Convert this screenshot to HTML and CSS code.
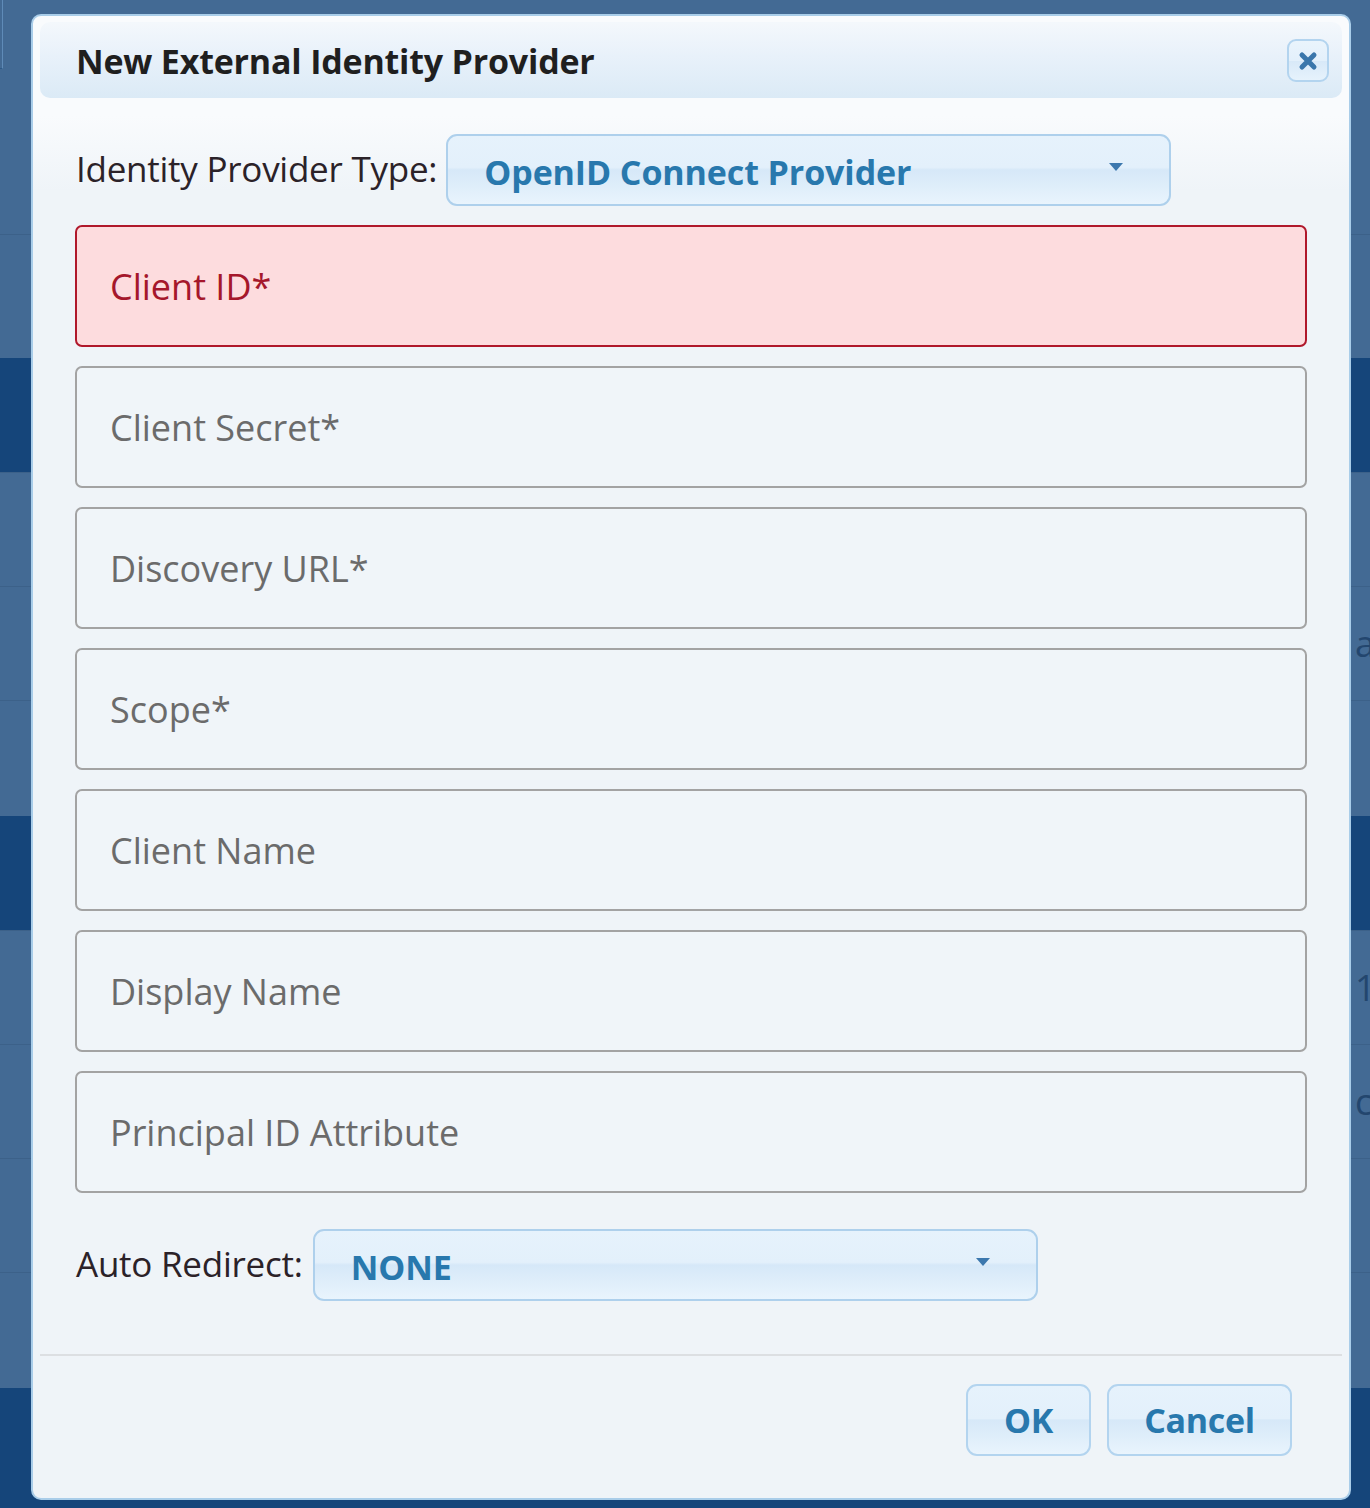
FILE: index.html
```html
<!DOCTYPE html>
<html>
<head>
<meta charset="utf-8">
<title>New External Identity Provider</title>
<link rel="stylesheet" href="styles.css">
</head>
<body>
<div class="backdrop">
  <div class="bg-corner"></div>
  <div class="bg-row r-top"></div>
  <div class="bg-row r-124"></div>
  <div class="bg-row r-114 dark"></div>
  <div class="bg-row r-114"></div>
  <div class="bg-row r-114"><span class="cell">a</span></div>
  <div class="bg-row r-116"></div>
  <div class="bg-row r-114 dark"></div>
  <div class="bg-row r-114"><span class="cell">1</span></div>
  <div class="bg-row r-114"><span class="cell">c</span></div>
  <div class="bg-row r-114"></div>
  <div class="bg-row r-116"></div>
  <div class="bg-row r-120 dark"></div>
</div>

<div class="dialog">
  <div class="dialog-header">
    <h1 class="dialog-title">New External Identity Provider</h1>
    <button class="close-btn" type="button" aria-label="Close">
      <svg width="22" height="22" viewBox="0 0 22 22"><path d="M5 5 L17 17 M17 5 L5 17" stroke="#3a76ab" stroke-width="5" stroke-linecap="round"/></svg>
    </button>
  </div>

  <div class="dialog-body">
    <div class="select-row">
      <span class="field-label">Identity Provider Type:</span>
      <div class="select select-wide">
        <span class="select-value">OpenID Connect Provider</span>
        <span class="select-arrow"></span>
      </div>
    </div>

    <div class="fields">
      <div class="input error">Client ID*</div>
      <div class="input">Client Secret*</div>
      <div class="input">Discovery URL*</div>
      <div class="input">Scope*</div>
      <div class="input">Client Name</div>
      <div class="input">Display Name</div>
      <div class="input">Principal ID Attribute</div>
    </div>

    <div class="select-row redirect-row">
      <span class="field-label">Auto Redirect:</span>
      <div class="select">
        <span class="select-value">NONE</span>
        <span class="select-arrow"></span>
      </div>
    </div>
  </div>

  <div class="dialog-footer">
    <button class="btn btn-ok" type="button">OK</button>
    <button class="btn btn-cancel" type="button">Cancel</button>
  </div>
</div>
</body>
</html>
```
FILE: styles.css
```css
html, body {
  margin: 0;
  padding: 0;
}
body {
  width: 1370px;
  height: 1508px;
  overflow: hidden;
  background: #436a94;
  font-family: "Open Sans", "Noto Sans", sans-serif;
  position: relative;
}

/* backdrop table behind modal */
.backdrop {
  display: flex;
  flex-direction: column;
  width: 1370px;
  height: 1508px;
  position: relative;
}
.bg-corner {
  position: absolute;
  left: 0;
  top: 0;
  width: 2px;
  height: 68px;
  border-right: 1px solid #5f8bb8;
  border-bottom: 1px solid #2f5a87;
}
.bg-row {
  flex: none;
  box-sizing: border-box;
  border-top: 1px solid #3c6189;
  display: flex;
  align-items: center;
  justify-content: flex-end;
}
.r-top { height: 234px; border-top: none; }
.r-124 { height: 124px; }
.r-114 { height: 114px; }
.r-116 { height: 116px; }
.r-120 { height: 120px; }
.bg-row.dark { background: #15457a; border-top-color: #15457a; }
.cell {
  width: 15px;
  overflow: hidden;
  font-size: 36px;
  color: #23466e;
  line-height: 1;
  white-space: nowrap;
}

/* dialog */
.dialog {
  position: absolute;
  left: 31px;
  top: 14px;
  width: 1320px;
  height: 1486px;
  box-sizing: border-box;
  border: 2px solid #a9cde9;
  border-radius: 10px;
  background: linear-gradient(to bottom, #f9fbfd 0px, #f9fbfd 100px, #eff4f8 175px, #eff4f8 100%);
  padding: 6px 7px 0 7px;
  display: flex;
  flex-direction: column;
}
.dialog-header {
  height: 76px;
  border-radius: 10px;
  background: linear-gradient(to bottom, #f4f8fc 0%, #e8f1fa 45%, #dbeaf6 100%);
  display: flex;
  align-items: center;
  justify-content: space-between;
  padding: 0 13px 0 36px;
}
.dialog-title {
  margin: 0;
  font-size: 34px;
  font-weight: 700;
  color: #1f1f1f;
  letter-spacing: -0.2px;
  position: relative;
  top: 1px;
}
.close-btn {
  width: 42px;
  height: 43px;
  box-sizing: border-box;
  border: 2px solid #b3d4ef;
  border-radius: 9px;
  background: linear-gradient(to bottom, #eaf4fc 0%, #e3f0fb 50%, #d8e9f8 52%, #e6f2fc 100%);
  padding: 0;
  display: flex;
  align-items: center;
  justify-content: center;
  margin-top: 1px;
}

.dialog-body {
  padding: 36px 36px 0 36px;
  display: flex;
  flex-direction: column;
}
.select-row {
  display: flex;
  align-items: center;
  gap: 9px;
}
.field-label {
  font-size: 35px;
  color: #2b2228;
  letter-spacing: -0.25px;
  position: relative;
  top: -2px;
}
.select {
  width: 725px;
  height: 72px;
  box-sizing: border-box;
  border: 2px solid #aed0ec;
  border-radius: 11px;
  background: linear-gradient(to bottom, #e6f2fc 0%, #e3f0fb 46%, #d6e8f8 50%, #dfeefa 75%, #e9f4fd 100%);
  display: flex;
  align-items: center;
  justify-content: space-between;
  padding: 0 46px 0 36px;
}
.select-value {
  font-size: 34px;
  font-weight: 700;
  color: #2878ad;
  letter-spacing: -0.1px;
  position: relative;
  top: 2px;
}
.select-arrow {
  width: 0;
  height: 0;
  border-left: 7px solid transparent;
  border-right: 7px solid transparent;
  border-top: 8px solid #3c78ae;
  position: relative;
  top: -3px;
}

.fields {
  margin-top: 19px;
  display: flex;
  flex-direction: column;
  gap: 19px;
}
.input {
  height: 122px;
  box-sizing: border-box;
  border: 2px solid #a3a3a3;
  border-radius: 7px;
  background: #f0f5f9;
  display: flex;
  align-items: center;
  padding-left: 33px;
  font-size: 36px;
  color: #6b6b6b;
  margin: 0 -1px;
}
.input.error {
  background: #fddcde;
  border-color: #b0182b;
  color: #a5172b;
}

.redirect-row {
  margin-top: 36px;
  gap: 10px;
}

.dialog-footer {
  margin-top: 53px;
  border-top: 2px solid #dcdfe2;
  display: flex;
  justify-content: flex-end;
  gap: 16px;
  padding: 28px 50px 0 0;
}
.btn {
  height: 72px;
  box-sizing: border-box;
  border: 2px solid #b3d4ef;
  border-radius: 11px;
  background: linear-gradient(to bottom, #e6f2fc 0%, #e3f0fb 48%, #d6e8f8 50%, #dfeefa 75%, #e9f4fd 100%);
  font-family: "Open Sans", "Noto Sans", sans-serif;
  font-size: 34px;
  font-weight: 700;
  color: #2878ad;
  padding: 0;
  letter-spacing: -0.3px;
}
.btn-ok { width: 125px; }
.btn-cancel { width: 185px; }
```
